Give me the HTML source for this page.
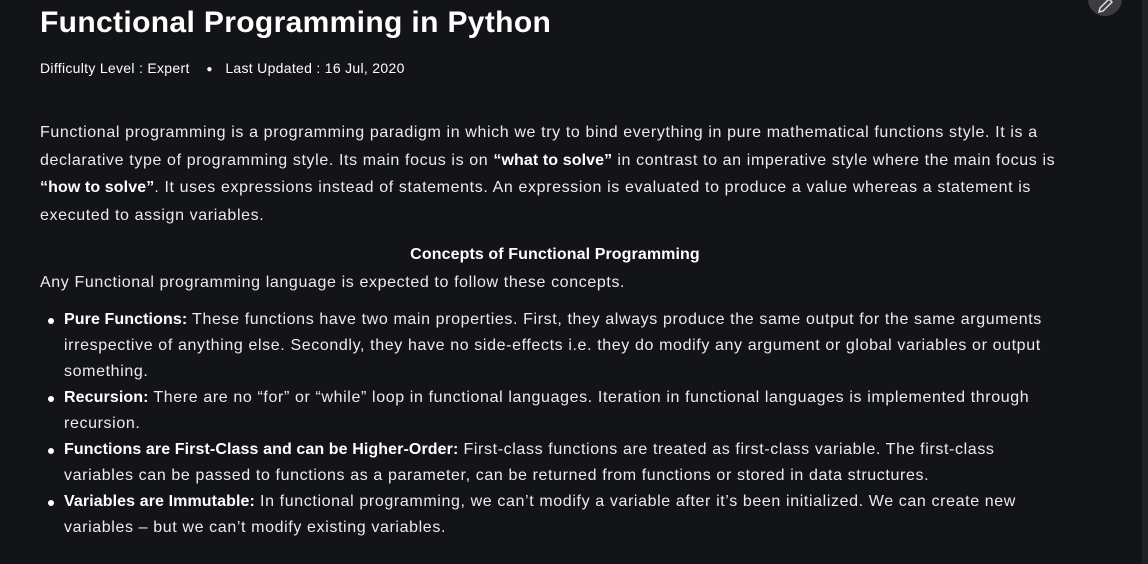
<!DOCTYPE html>
<html><head><meta charset="utf-8"><style>
body{margin:0;width:1148px;height:564px;overflow:hidden;background:#131417;color:#ececec;font-family:"Liberation Sans",sans-serif;position:relative}
.l{position:absolute;left:40px;white-space:nowrap;font-size:16px;letter-spacing:0.62px}
h1{position:absolute;left:40px;top:6px;margin:0;font-size:30px;font-weight:bold;color:#fff;letter-spacing:0.35px}
.meta{position:absolute;left:40px;top:60px;font-size:14px;color:#fff;letter-spacing:0.3px}
b{font-weight:bold;color:#fff;letter-spacing:0.1px}
.bul{position:absolute;left:48px;width:6px;height:6px;border-radius:50%;background:#fff}
.sb{position:absolute;right:0;top:0;width:6px;height:564px;background:#202226}
.edit{position:absolute;left:1088px;top:-18px;width:34px;height:34px;border-radius:50%;background:#3c3d42}
</style></head><body>
<h1>Functional Programming in Python</h1>
<div class="meta">Difficulty Level : Expert &nbsp;&nbsp; <span style="font-size:10px;vertical-align:1px">●</span> &nbsp; Last Updated : 16 Jul, 2020</div>
<div class="l" style="top:124px">Functional programming is a programming paradigm in which we try to bind everything in pure mathematical functions style. It is a</div>
<div class="l" style="top:152px">declarative type of programming style. Its main focus is on <b>“what to solve”</b> in contrast to an imperative style where the main focus is</div>
<div class="l" style="top:179px"><b>“how to solve”</b>. It uses expressions instead of statements. An expression is evaluated to produce a value whereas a statement is</div>
<div class="l" style="top:207px">executed to assign variables.</div>
<div class="l" style="top:246px;left:0;width:1110px;text-align:center"><b>Concepts of Functional Programming</b></div>
<div class="l" style="top:274px">Any Functional programming language is expected to follow these concepts.</div>
<div class="bul" style="top:318px"></div>
<div class="l" style="top:311px;left:64px"><b>Pure Functions:</b> These functions have two main properties. First, they always produce the same output for the same arguments</div>
<div class="l" style="top:337px;left:64px">irrespective of anything else. Secondly, they have no side-effects i.e. they do modify any argument or global variables or output</div>
<div class="l" style="top:363px;left:64px">something.</div>
<div class="bul" style="top:396px"></div>
<div class="l" style="top:389px;left:64px"><b>Recursion:</b> There are no “for” or “while” loop in functional languages. Iteration in functional languages is implemented through</div>
<div class="l" style="top:415px;left:64px">recursion.</div>
<div class="bul" style="top:448px"></div>
<div class="l" style="top:441px;left:64px"><b>Functions are First-Class and can be Higher-Order:</b> First-class functions are treated as first-class variable. The first-class</div>
<div class="l" style="top:467px;left:64px">variables can be passed to functions as a parameter, can be returned from functions or stored in data structures.</div>
<div class="bul" style="top:500px"></div>
<div class="l" style="top:493px;left:64px"><b>Variables are Immutable:</b> In functional programming, we can’t modify a variable after it’s been initialized. We can create new</div>
<div class="l" style="top:519px;left:64px">variables – but we can’t modify existing variables.</div>
<div class="edit"><svg width="34" height="34" style="position:absolute;left:0;top:0"><path d="M11 30 L12 26 L21 17 L24 20 L15 29 Z" fill="none" stroke="#ddd" stroke-width="1.5"/></svg></div>
<div class="sb"></div>
</body></html>
